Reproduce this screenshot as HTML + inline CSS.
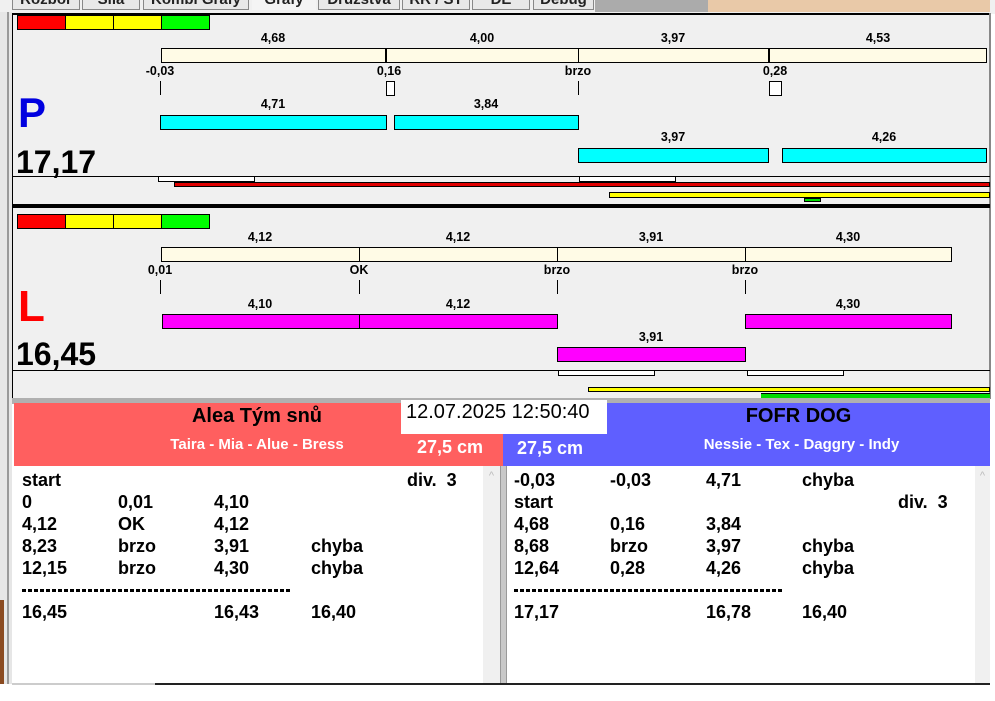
<!DOCTYPE html>
<html><head><meta charset="utf-8"><style>
*{margin:0;padding:0;box-sizing:border-box}
body{width:995px;height:701px;background:#fff;position:relative;overflow:hidden;font-family:"Liberation Sans",Arial,sans-serif}
.a{position:absolute}
.c{position:absolute;transform:translateX(-50%);font-weight:bold;font-size:12.5px;line-height:14px;white-space:nowrap;color:#000}
.bx{position:absolute;border:1px solid #000}
.tab{position:absolute;top:-6px;height:16px;background:#e8e8e8;border:1px solid #888;border-top:none;font-weight:bold;font-size:15px;line-height:12px;text-align:center;color:#222;overflow:hidden}
.t{position:absolute;font-weight:bold;font-size:18px;line-height:22px;white-space:nowrap;color:#000}
.d{position:absolute;height:3px;background:repeating-linear-gradient(90deg,#000 0 4px,transparent 4px 6px)}
</style></head><body>
<div class="a" style="left:0;top:0;width:995px;height:14px;background:#f0f0f0"></div>
<div class="tab" style="left:12px;width:68px">Rozbor</div>
<div class="tab" style="left:82px;width:58px">Síla</div>
<div class="tab" style="left:143px;width:106px">Kombi Grafy</div>
<div class="tab" style="left:252px;width:64px;background:#f4f4f4;border:none">Grafy</div>
<div class="tab" style="left:318px;width:82px">Družstva</div>
<div class="tab" style="left:402px;width:68px">RR / ST</div>
<div class="tab" style="left:472px;width:58px">DE</div>
<div class="tab" style="left:533px;width:61px">Debug</div>
<div class="a" style="left:595px;top:0;width:113px;height:12px;background:#ababab"></div>
<div class="a" style="left:708px;top:0;width:282px;height:12px;background:#e9c9a8"></div>
<div class="a" style="left:0;top:12px;width:12px;height:672px;background:#e6e6e6"></div>
<div class="a" style="left:7px;top:12px;width:2px;height:672px;background:#999"></div>
<div class="a" style="left:0;top:600px;width:4px;height:84px;background:#8a4a20"></div>
<div class="a" style="left:12px;top:13px;width:978px;height:386px;background:#f0f0f0;border-top:2px solid #000;border-left:1px solid #000"></div>
<div class="a" style="left:989px;top:13px;width:2px;height:386px;background:#888"></div>

<div class="bx" style="left:17px;top:15px;width:49px;height:15px;background:#f00"></div>
<div class="bx" style="left:65px;top:15px;width:49px;height:15px;background:#ff0"></div>
<div class="bx" style="left:113px;top:15px;width:49px;height:15px;background:#ff0"></div>
<div class="bx" style="left:161px;top:15px;width:49px;height:15px;background:#0f0"></div>
<div class="c" style="left:273px;top:31px">4,68</div>
<div class="c" style="left:482px;top:31px">4,00</div>
<div class="c" style="left:673px;top:31px">3,97</div>
<div class="c" style="left:878px;top:31px">4,53</div>
<div class="bx" style="left:161px;top:48px;width:826px;height:15px;background:#fffbe6"></div>
<div class="a" style="left:385px;top:48px;width:2px;height:15px;background:#000"></div>
<div class="a" style="left:578px;top:48px;width:1px;height:15px;background:#000"></div>
<div class="a" style="left:768px;top:48px;width:2px;height:15px;background:#000"></div>
<div class="c" style="left:160px;top:64px">-0,03</div>
<div class="c" style="left:389px;top:64px">0,16</div>
<div class="c" style="left:578px;top:64px">brzo</div>
<div class="c" style="left:775px;top:64px">0,28</div>
<div class="a" style="left:160px;top:81px;width:1px;height:14px;background:#000"></div>
<div class="a" style="left:578px;top:81px;width:1px;height:14px;background:#000"></div>
<div class="bx" style="left:386px;top:81px;width:9px;height:15px;background:#fff"></div>
<div class="bx" style="left:769px;top:81px;width:13px;height:15px;background:#fff"></div>
<div class="a" style="left:18px;top:88px;font-weight:bold;font-size:42px;line-height:50px;color:#0000e0">P</div>
<div class="c" style="left:273px;top:97px">4,71</div>
<div class="c" style="left:486px;top:97px">3,84</div>
<div class="bx" style="left:160px;top:115px;width:227px;height:15px;background:#0ff"></div>
<div class="bx" style="left:394px;top:115px;width:185px;height:15px;background:#0ff"></div>
<div class="c" style="left:673px;top:130px">3,97</div>
<div class="c" style="left:884px;top:130px">4,26</div>
<div class="bx" style="left:578px;top:148px;width:191px;height:15px;background:#0ff"></div>
<div class="bx" style="left:782px;top:148px;width:205px;height:15px;background:#0ff"></div>
<div class="a" style="left:16px;top:143px;font-weight:bold;font-size:32px;line-height:38px">17,17</div>
<div class="a" style="left:13px;top:176px;width:977px;height:1px;background:#000"></div>
<div class="bx" style="left:158px;top:176px;width:97px;height:6px;background:#fff"></div>
<div class="bx" style="left:579px;top:176px;width:97px;height:6px;background:#fff"></div>
<div class="bx" style="left:174px;top:182px;width:816px;height:5px;background:#e00000"></div>
<div class="bx" style="left:609px;top:192px;width:381px;height:6px;background:#ff0"></div>
<div class="bx" style="left:804px;top:198px;width:17px;height:4px;background:#0d0"></div>
<div class="a" style="left:12px;top:204px;width:978px;height:4px;background:#000"></div>

<div class="bx" style="left:17px;top:214px;width:49px;height:15px;background:#f00"></div>
<div class="bx" style="left:65px;top:214px;width:49px;height:15px;background:#ff0"></div>
<div class="bx" style="left:113px;top:214px;width:49px;height:15px;background:#ff0"></div>
<div class="bx" style="left:161px;top:214px;width:49px;height:15px;background:#0f0"></div>
<div class="c" style="left:260px;top:230px">4,12</div>
<div class="c" style="left:458px;top:230px">4,12</div>
<div class="c" style="left:651px;top:230px">3,91</div>
<div class="c" style="left:848px;top:230px">4,30</div>
<div class="bx" style="left:161px;top:247px;width:791px;height:15px;background:#fffbe6"></div>
<div class="a" style="left:359px;top:247px;width:1px;height:15px;background:#000"></div>
<div class="a" style="left:557px;top:247px;width:1px;height:15px;background:#000"></div>
<div class="a" style="left:745px;top:247px;width:1px;height:15px;background:#000"></div>
<div class="c" style="left:160px;top:263px">0,01</div>
<div class="c" style="left:359px;top:263px">OK</div>
<div class="c" style="left:557px;top:263px">brzo</div>
<div class="c" style="left:745px;top:263px">brzo</div>
<div class="a" style="left:160px;top:280px;width:1px;height:14px;background:#000"></div>
<div class="a" style="left:359px;top:280px;width:1px;height:14px;background:#000"></div>
<div class="a" style="left:557px;top:280px;width:1px;height:14px;background:#000"></div>
<div class="a" style="left:745px;top:280px;width:1px;height:14px;background:#000"></div>
<div class="a" style="left:18px;top:282px;font-size:44px;line-height:50px;color:#f00;font-weight:bold">L</div>
<div class="c" style="left:260px;top:297px">4,10</div>
<div class="c" style="left:458px;top:297px">4,12</div>
<div class="c" style="left:848px;top:297px">4,30</div>
<div class="bx" style="left:162px;top:314px;width:198px;height:15px;background:#f0f"></div>
<div class="bx" style="left:359px;top:314px;width:199px;height:15px;background:#f0f"></div>
<div class="bx" style="left:745px;top:314px;width:207px;height:15px;background:#f0f"></div>
<div class="c" style="left:651px;top:330px">3,91</div>
<div class="bx" style="left:557px;top:347px;width:189px;height:15px;background:#f0f"></div>
<div class="a" style="left:16px;top:335px;font-weight:bold;font-size:32px;line-height:38px">16,45</div>
<div class="a" style="left:13px;top:370px;width:977px;height:1px;background:#000"></div>
<div class="bx" style="left:558px;top:370px;width:97px;height:6px;background:#fff"></div>
<div class="bx" style="left:747px;top:370px;width:97px;height:6px;background:#fff"></div>
<div class="bx" style="left:588px;top:387px;width:402px;height:5px;background:#ff0"></div>
<div class="a" style="left:761px;top:393px;width:229px;height:5px;background:#0d0;border-top:1px solid #000"></div>

<div class="a" style="left:12px;top:398px;width:978px;height:6px;background:#b0b0b0"></div>
<div class="a" style="left:14px;top:403px;width:490px;height:63px;background:#ff5f5f"></div>
<div class="a" style="left:503px;top:403px;width:487px;height:63px;background:#5f5fff"></div>
<div class="a" style="left:14px;top:404px;width:486px;text-align:center;font-weight:bold;font-size:20px;line-height:24px">Alea Tým snů</div>
<div class="a" style="left:14px;top:436px;width:486px;text-align:center;font-weight:bold;font-size:15px;line-height:17px;color:#fff">Taira - Mia - Alue - Bress</div>
<div class="a" style="left:401px;top:400px;width:206px;height:34px;background:#fff;font-size:20px;line-height:24px;padding-left:5px;white-space:nowrap">12.07.2025 12:50:40</div>
<div class="a" style="left:417px;top:436px;font-weight:bold;font-size:18px;line-height:22px;color:#fff">27,5 cm</div>
<div class="a" style="left:517px;top:437px;font-weight:bold;font-size:18px;line-height:22px;color:#fff">27,5 cm</div>
<div class="a" style="left:607px;top:404px;width:383px;text-align:center;font-weight:bold;font-size:20px;line-height:24px">FOFR DOG</div>
<div class="a" style="left:503px;top:436px;width:487px;text-align:center;font-weight:bold;font-size:15px;line-height:17px;color:#fff;padding-left:110px">Nessie - Tex - Daggry - Indy</div>

<div class="a" style="left:14px;top:466px;width:470px;height:218px;background:#fff"></div>
<div class="a" style="left:483px;top:466px;width:17px;height:218px;background:#f0f0f0;color:#bbb;font-size:11px;text-align:center;line-height:20px">^</div>
<div class="a" style="left:500px;top:466px;width:7px;height:218px;background:#c8c8c8;border-left:1px solid #999;border-right:1px solid #999"></div>
<div class="a" style="left:507px;top:466px;width:468px;height:218px;background:#fff"></div>
<div class="a" style="left:975px;top:466px;width:15px;height:218px;background:#f0f0f0;color:#bbb;font-size:11px;text-align:center;line-height:20px">^</div>
<div class="a" style="left:12px;top:683px;width:978px;height:2px;background:#222"></div>
<div class="a" style="left:12px;top:683px;width:143px;height:2px;background:#ccc"></div>

<div class="t" style="left:22px;top:469px">start</div><div class="t" style="left:407px;top:469px">div.&nbsp; 3</div>
<div class="t" style="left:22px;top:491px">0</div><div class="t" style="left:118px;top:491px">0,01</div><div class="t" style="left:214px;top:491px">4,10</div>
<div class="t" style="left:22px;top:513px">4,12</div><div class="t" style="left:118px;top:513px">OK</div><div class="t" style="left:214px;top:513px">4,12</div>
<div class="t" style="left:22px;top:535px">8,23</div><div class="t" style="left:118px;top:535px">brzo</div><div class="t" style="left:214px;top:535px">3,91</div><div class="t" style="left:311px;top:535px">chyba</div>
<div class="t" style="left:22px;top:557px">12,15</div><div class="t" style="left:118px;top:557px">brzo</div><div class="t" style="left:214px;top:557px">4,30</div><div class="t" style="left:311px;top:557px">chyba</div>
<div class="d" style="left:22px;top:589px;width:270px"></div>
<div class="t" style="left:22px;top:601px">16,45</div><div class="t" style="left:214px;top:601px">16,43</div><div class="t" style="left:311px;top:601px">16,40</div>

<div class="t" style="left:514px;top:469px">-0,03</div><div class="t" style="left:610px;top:469px">-0,03</div><div class="t" style="left:706px;top:469px">4,71</div><div class="t" style="left:802px;top:469px">chyba</div>
<div class="t" style="left:514px;top:491px">start</div><div class="t" style="left:898px;top:491px">div.&nbsp; 3</div>
<div class="t" style="left:514px;top:513px">4,68</div><div class="t" style="left:610px;top:513px">0,16</div><div class="t" style="left:706px;top:513px">3,84</div>
<div class="t" style="left:514px;top:535px">8,68</div><div class="t" style="left:610px;top:535px">brzo</div><div class="t" style="left:706px;top:535px">3,97</div><div class="t" style="left:802px;top:535px">chyba</div>
<div class="t" style="left:514px;top:557px">12,64</div><div class="t" style="left:610px;top:557px">0,28</div><div class="t" style="left:706px;top:557px">4,26</div><div class="t" style="left:802px;top:557px">chyba</div>
<div class="d" style="left:514px;top:589px;width:270px"></div>
<div class="t" style="left:514px;top:601px">17,17</div><div class="t" style="left:706px;top:601px">16,78</div><div class="t" style="left:802px;top:601px">16,40</div>
</body></html>
